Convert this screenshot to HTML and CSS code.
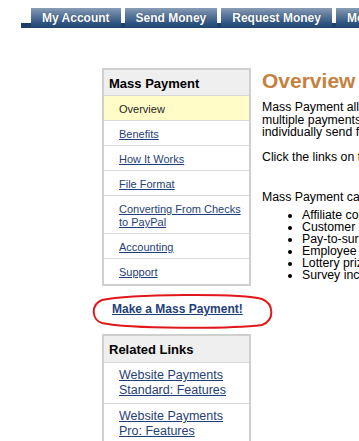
FILE: index.html
```html
<!DOCTYPE html>
<html lang="en">
<head>
<meta charset="utf-8">
<title>Mass Payment - Overview</title>
<link rel="stylesheet" href="styles.css">
</head>
<body>
<div class="page">
  <nav class="tabs">
    <a class="tab" href="#">My Account</a>
    <a class="tab" href="#">Send Money</a>
    <a class="tab" href="#">Request Money</a>
    <a class="tab" href="#">Merchant Services</a>
  </nav>

  <div class="layout">
    <aside class="side">
      <div class="box">
        <div class="box-head">Mass Payment</div>
        <ul class="menu">
          <li class="menu-item current">Overview</li>
          <li class="menu-item"><a href="#">Benefits</a></li>
          <li class="menu-item"><a href="#">How It Works</a></li>
          <li class="menu-item"><a href="#">File Format</a></li>
          <li class="menu-item"><a href="#">Converting From Checks to PayPal</a></li>
          <li class="menu-item"><a href="#">Accounting</a></li>
          <li class="menu-item"><a href="#">Support</a></li>
        </ul>
      </div>

      <div class="cta">
        <a href="#">Make a Mass Payment!</a>
        <svg class="circle" width="186" height="37" viewBox="0 0 186 37" aria-hidden="true">
          <path d="M 12,7 C 40,1 150,0 172,6 C 184,11 185,27 172,32 C 140,36 40,36 12,30 C 2,27 0,12 12,7 Z" fill="none" stroke="#e0181c" stroke-width="2"/>
        </svg>
      </div>

      <div class="box">
        <div class="box-head related-head">Related Links</div>
        <ul class="related">
          <li class="related-item"><a href="#">Website Payments Standard: Features</a></li>
          <li class="related-item"><a href="#">Website Payments Pro: Features</a></li>
        </ul>
      </div>
    </aside>

    <main class="main">
      <h1 class="title">Overview</h1>
      <p class="text first">Mass Payment allows you to send multiple payments instantly, rather than having to<br>multiple payments, so you don't have to spend the time and effort to<br>individually send funds to each recipient.</p>
      <p class="text second">Click the links on the left to learn more about Mass Payment and how it can help your business.</p>
      <p class="text third">Mass Payment can be used for:</p>
      <ul class="uses">
        <li>Affiliate commissions</li>
        <li>Customer rebates</li>
        <li>Pay-to-surf payments</li>
        <li>Employee bonuses</li>
        <li>Lottery prizes</li>
        <li>Survey incentives</li>
      </ul>
    </main>
  </div>
</div>
</body>
</html>
```

FILE: styles.css
```css
html, body {
  margin: 0;
  padding: 0;
  background: #ffffff;
  overflow: hidden;
}

body {
  font-family: "Liberation Sans", Arial, sans-serif;
  color: #000000;
}

.page {
  width: 359px;
  overflow: hidden;
}

/* ---------- top tabs ---------- */
.tabs {
  display: flex;
  gap: 4px;
  margin: 8px 0 0 21px;
  padding-left: 10px;
  height: 20px;
  width: 600px;
  background: linear-gradient(to bottom, transparent 15px, #1d3f69 15px);
}

.tab {
  flex: 0 0 auto;
  display: block;
  height: 20px;
  padding: 0 11px;
  line-height: 21px;
  font-size: 12px;
  font-weight: bold;
  color: #ffffff;
  text-decoration: none;
  white-space: nowrap;
  text-shadow: 0 0 1px #1c3558;
  background: linear-gradient(to bottom, #8a9db5 0%, #6882a3 25%, #47678e 55%, #2b5180 80%, #21466f 100%);
}

/* ---------- layout ---------- */
.layout {
  display: flex;
  margin-top: 40px;
  padding-left: 102px;
  width: 700px;
}

.side {
  flex: 0 0 149px;
  width: 149px;
}

.main {
  flex: 0 0 480px;
  margin-left: 11px;
}

/* ---------- boxes ---------- */
.box {
  border: 2px solid #cfcfcf;
}

.box-head {
  background: #efefef;
  border-bottom: 1px solid #d6d6d6;
  padding: 6px 5px 4px;
  font-size: 13px;
  line-height: 15px;
  font-weight: bold;
  color: #000000;
}

.related-head {
  padding-bottom: 5px;
}

.menu,
.related {
  list-style: none;
  margin: 0;
  padding: 0;
}

.menu-item {
  padding: 7px 6px 4px 15px;
  font-size: 11px;
  line-height: 13px;
  border-bottom: 1px solid #d9d9d9;
  color: #1f1f1f;
}

.menu-item:last-child {
  border-bottom: 0;
  padding-bottom: 5px;
}

.menu-item.current {
  background: #fffcc8;
}

.menu a,
.related a,
.cta a {
  color: #1f3f7a;
  text-decoration: underline;
}

.related-item {
  padding: 5px 6px 5px 15px;
  font-size: 12.5px;
  line-height: 15px;
  border-bottom: 1px solid #d9d9d9;
}

.related-item:last-child {
  border-bottom: 0;
}

/* ---------- call to action ---------- */
.cta {
  position: relative;
  margin: 16px 0 17px;
  padding-left: 10px;
  font-size: 12px;
  line-height: 15px;
  font-weight: bold;
  white-space: nowrap;
}

.circle {
  position: absolute;
  left: -12px;
  top: -9px;
  pointer-events: none;
}

/* ---------- main content ---------- */
.title {
  margin: 0;
  font-size: 21px;
  line-height: 25px;
  font-weight: bold;
  color: #c6813f;
}

.text {
  margin: 0;
  font-size: 12.3px;
  line-height: 12.5px;
  white-space: nowrap;
}

.text.first {
  margin-top: 8px;
}

.text.second {
  margin-top: 12.5px;
}

.text.third {
  margin-top: 27.5px;
}

.uses {
  margin: 5px 0 0;
  padding-left: 40px;
  font-size: 12.3px;
  line-height: 12px;
  list-style: disc;
  white-space: nowrap;
}
```
